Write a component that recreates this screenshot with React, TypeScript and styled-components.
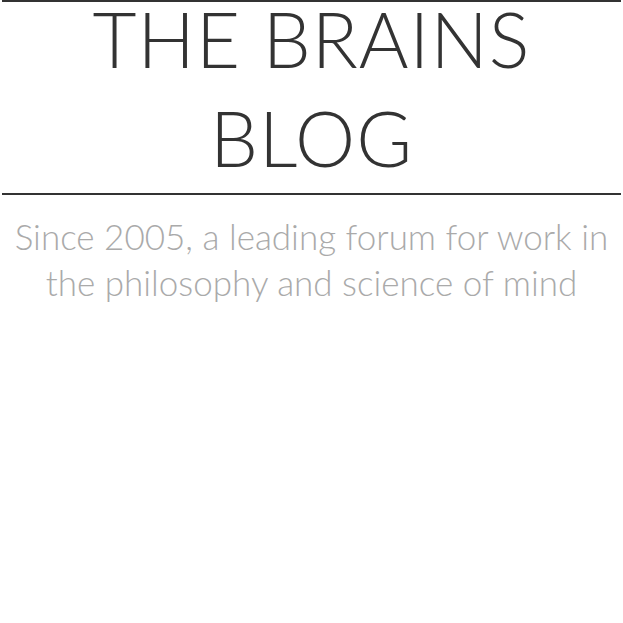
import React from "react";
import styled, { createGlobalStyle } from "styled-components";

const Global = createGlobalStyle`
  html, body { margin: 0; padding: 0; background: #fff; }
  body { width: 623px; }
`;

const Page = styled.div`
  padding: 0 2px;
`;

const Masthead = styled.header`
  border-top: 2px solid #333;
  border-bottom: 2px solid #333;
  padding: 0 0 18px;
`;

const Title = styled.h1`
  margin: 0;
  display: flex;
  flex-direction: column;
  align-items: center;
  gap: 25px;
  font-family: Lato, "Open Sans", sans-serif;
  font-weight: 300;
  font-size: 76px;
  line-height: 74px;
  letter-spacing: 1px;
  color: #333;
  text-transform: uppercase;
`;

const TitleLine = styled.span`
  display: block;
`;

const Tagline = styled.p`
  margin: 18px 0 0;
  font-family: Lato, sans-serif;
  font-weight: 300;
  font-size: 35px;
  line-height: 46px;
  color: #aaa;
  text-align: center;
`;

export default function App() {
  return (
    <>
      <Global />
      <Page>
        <Masthead>
          <Title>
            <TitleLine>The Brains</TitleLine>
            <TitleLine>Blog</TitleLine>
          </Title>
        </Masthead>
        <Tagline>
          Since 2005, a leading forum for work in
          <br />
          the philosophy and science of mind
        </Tagline>
      </Page>
    </>
  );
}
